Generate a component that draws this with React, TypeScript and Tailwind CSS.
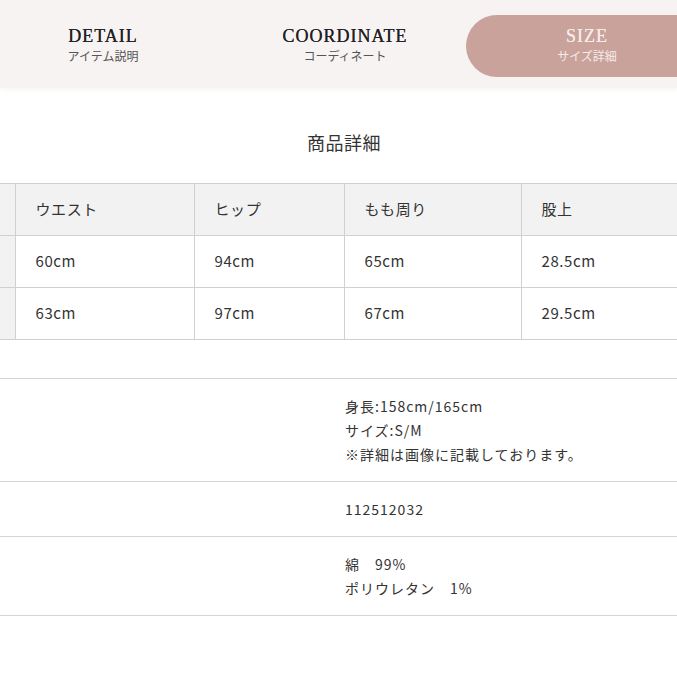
import React from "react"

const jp = { fontFamily: '"Noto Sans CJK JP", "Noto Sans", sans-serif' }
const serif = { fontFamily: '"Liberation Serif", "DejaVu Serif", serif' }

const tabs = [
  { en: "DETAIL", ja: "アイテム説明", active: false },
  { en: "COORDINATE", ja: "コーディネート", active: false },
  { en: "SIZE", ja: "サイズ詳細", active: true },
]

const heads = ["ウエスト", "ヒップ", "もも周り", "股上"]
const rows = [
  ["60cm", "94cm", "65cm", "28.5cm"],
  ["63cm", "97cm", "67cm", "29.5cm"],
]
const colW = ["w-[179px]", "w-[150px]", "w-[177px]", "w-[200px]"]

const details = [
  ["身長:158cm/165cm", "サイズ:S/M", "※詳細は画像に記載しております。"],
  ["112512032"],
  ["綿　99%", "ポリウレタン　1%"],
]

export default function App() {
  return (
    <div className="w-[677px] h-[677px] overflow-hidden bg-white text-[#333]" style={jp}>
      {/* tab bar */}
      <div className="h-[88px] bg-[#f7f3f2] shadow-[0_2px_4px_rgba(0,0,0,0.04)] pt-[15px]">
        <div className="flex -ml-[18px]">
          {tabs.map((t) => (
            <div
              key={t.en}
              className={
                "w-[242px] shrink-0 h-[62px] flex flex-col items-center justify-center pb-[4px] " +
                (t.active ? "bg-[#c9a29b] rounded-l-full text-[#f6ece9]" : "")
              }
            >
              <span
                className={
                  "text-[18px] leading-[22px] tracking-[1px] font-normal " +
                  (t.active ? "[text-shadow:0_0_0.6px_#f6ece9]" : "text-[#222] [text-shadow:0_0_0.5px_#222]")
                }
                style={serif}
              >
                {t.en}
              </span>
              <span className={"text-[12px] leading-[16px] mt-[1px] " + (t.active ? "" : "text-[#555]")}>
                {t.ja}
              </span>
            </div>
          ))}
        </div>
      </div>

      <h2 className="text-center text-[18px] leading-[26px] mt-[41px] pl-[11px] tracking-[0.5px]">商品詳細</h2>

      {/* size table */}
      <table className="mt-[28px] w-[721px] table-fixed border-collapse text-[15px] tracking-[0.6px]">
        <colgroup>
          <col className="w-[15px]" />
          {colW.map((w) => (
            <col key={w} className={w} />
          ))}
        </colgroup>
        <thead>
          <tr className="h-[52px] bg-[#f2f2f2]">
            <th className="border-y border-r border-[#d0d0d0] p-0"></th>
            {heads.map((h) => (
              <th key={h} className="border border-[#d0d0d0] text-left font-normal p-0 pl-[20px]">
                {h}
              </th>
            ))}
          </tr>
        </thead>
        <tbody>
          {rows.map((r, ri) => (
            <tr key={ri} className="h-[52px]">
              <td className="bg-[#f2f2f2] border-y border-r border-[#d0d0d0] p-0"></td>
              {r.map((c, i) => (
                <td key={i} className="border border-[#d0d0d0] p-0 pl-[20px]">
                  {c}
                </td>
              ))}
            </tr>
          ))}
        </tbody>
      </table>

      {/* detail rows */}
      <div className="mt-[38px] border-t border-[#d5d5d5]">
        {details.map((lines, i) => (
          <div key={i} className="grid grid-cols-[345px_1fr] border-b border-[#d5d5d5] py-[15px]">
            <div></div>
            <div className="text-[14px] leading-[24px] tracking-[1px] whitespace-pre">
              {lines.map((l) => (
                <div key={l}>{l}</div>
              ))}
            </div>
          </div>
        ))}
      </div>
    </div>
  )
}
